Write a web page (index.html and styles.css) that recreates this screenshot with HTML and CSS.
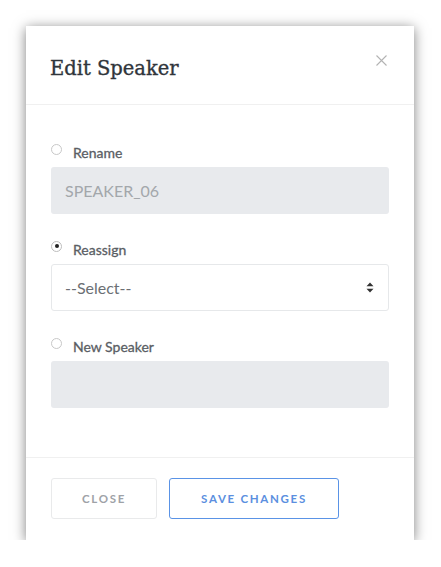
FILE: index.html
```html
<!DOCTYPE html>
<html>
<head>
<meta charset="utf-8">
<link rel="stylesheet" href="styles.css">
</head>
<body>
<div class="modal">
  <div class="modal-header">
    <h1 class="title">Edit Speaker</h1>
    <span class="close-x">
      <svg width="11" height="11" viewBox="0 0 11 11"><path d="M0.5 0.5 L10.5 10.5 M10.5 0.5 L0.5 10.5" stroke="#b3b3b3" stroke-width="1.1" fill="none"/></svg>
    </span>
  </div>
  <div class="modal-body">
    <div class="group">
      <label class="radio-label"><span class="radio"></span>Rename</label>
      <div class="field filled">SPEAKER_06</div>
    </div>
    <div class="group">
      <label class="radio-label"><span class="radio checked"></span>Reassign</label>
      <div class="field select">
        <span>--Select--</span>
        <svg class="arrows" width="8" height="11" viewBox="0 0 8 11"><path d="M4 0.5 L7.5 4.3 L0.5 4.3 Z M4 10.5 L7.5 6.7 L0.5 6.7 Z" fill="#333"/></svg>
      </div>
    </div>
    <div class="group">
      <label class="radio-label"><span class="radio"></span>New Speaker</label>
      <div class="field filled"></div>
    </div>
  </div>
  <div class="modal-footer">
    <button class="btn btn-close">CLOSE</button>
    <button class="btn btn-save">SAVE CHANGES</button>
  </div>
</div>
</body>
</html>
```

FILE: styles.css
```css
html, body {
  margin: 0;
  padding: 0;
  background: #ffffff;
}
body {
  padding: 26px 0 0 26px;
  font-family: Lato, "Open Sans", sans-serif;
}
.modal {
  width: 388px;
  height: 514px;
  background: #fff;
  box-shadow: 0 2px 12px rgba(0,0,0,0.5);
  display: flex;
  flex-direction: column;
}
.modal-header {
  height: 78px;
  border-bottom: 1px solid #f0f0f0;
  display: flex;
  justify-content: space-between;
  align-items: flex-start;
  padding: 0 27px 0 24px;
}
.title {
  margin: 30px 0 0 0;
  font-family: "DejaVu Serif", serif;
  font-weight: normal;
  font-size: 19.5px;
  line-height: 26px;
  color: #30353b;
  -webkit-text-stroke: 0.35px #30353b;
}
.close-x {
  margin-top: 29px;
  display: block;
  line-height: 0;
}
.modal-body {
  flex: 1;
  padding: 38px 25px 0 25px;
}
.group {
  margin-bottom: 26px;
}
.radio-label {
  display: flex;
  align-items: center;
  height: 18px;
  font-size: 14px;
  font-weight: normal;
  color: #5a5e64;
  -webkit-text-stroke: 0.3px #5a5e64;
  margin-bottom: 6px;
}
.radio {
  width: 11px;
  height: 11px;
  border: 1px solid #c8c8c8;
  border-radius: 50%;
  box-sizing: border-box;
  margin: -6px 11px 0 0;
  position: relative;
  background: #fff;
  -webkit-text-stroke: 0;
}
.radio.checked {
  border-color: #bdbdbd;
}
.radio.checked::after {
  content: "";
  position: absolute;
  left: 2.5px;
  top: 2.5px;
  width: 4px;
  height: 4px;
  border-radius: 50%;
  background: #222;
}
.field {
  height: 47px;
  box-sizing: border-box;
  border-radius: 3px;
  padding: 0 14px;
  display: flex;
  align-items: center;
  font-size: 16px;
}
.filled {
  background: #e8eaed;
  color: #a3a7ab;
}
.select {
  border: 1px solid #e6e8ea;
  color: #6b6f74;
  justify-content: space-between;
  padding: 0 14px 0 13px;
}
.modal-footer {
  border-top: 1px solid #f0f0f0;
  padding: 20px 25px 0 25px;
  height: 62px;
  display: flex;
  gap: 12px;
  align-items: flex-start;
}
.btn {
  height: 41px;
  background: #fff;
  border-radius: 3px;
  font-family: Lato, sans-serif;
  font-weight: bold;
  font-size: 11.5px;
  letter-spacing: 1.7px;
  box-sizing: border-box;
  padding: 0;
}
.btn-close {
  width: 106px;
  border: 1px solid #e9eaeb;
  color: #9ea2a7;
}
.btn-save {
  width: 170px;
  border: 1px solid #5a93e6;
  color: #5b8fe0;
}
```
